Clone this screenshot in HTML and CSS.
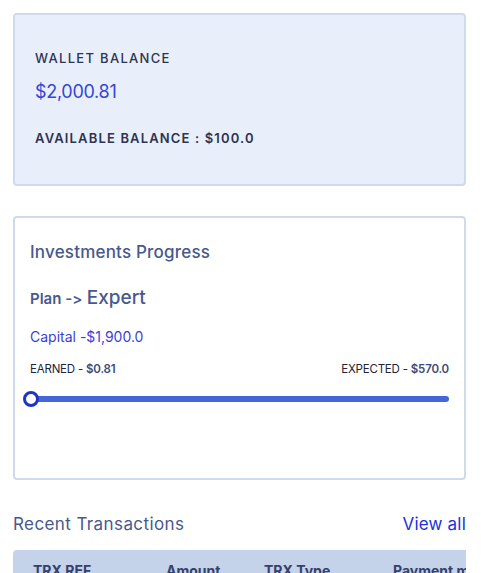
FILE: index.html
```html
<!DOCTYPE html>
<html>
<head>
<meta charset="utf-8">
<link rel="stylesheet" href="styles.css">
</head>
<body>
<div class="page">
  <section class="card wallet">
    <div class="label">WALLET BALANCE</div>
    <div class="amount">$2,000.81</div>
    <div class="avail">AVAILABLE BALANCE : $100.0</div>
  </section>

  <section class="card progress">
    <h2 class="title">Investments Progress</h2>
    <div class="plan"><span class="plan-k">Plan -&gt;</span> <span class="plan-v">Expert</span></div>
    <div class="capital">Capital -$1,900.0</div>
    <div class="range-labels">
      <span>EARNED - <b>$0.81</b></span>
      <span>EXPECTED - <b>$570.0</b></span>
    </div>
    <div class="slider">
      <div class="track"></div>
      <div class="thumb"></div>
    </div>
  </section>

  <div class="recent-head">
    <h3>Recent Transactions</h3>
    <a class="view-all">View all</a>
  </div>
  <div class="table-wrap">
    <div class="thead">
      <span class="col c1">TRX REF</span>
      <span class="col c2">Amount</span>
      <span class="col c3">TRX Type</span>
      <span class="col c4">Payment method</span>
    </div>
  </div>
</div>
</body>
</html>
```

FILE: styles.css
```css
* { box-sizing: border-box; }
html, body { margin: 0; padding: 0; background: #fff; }
body {
  font-family: "Inter", "Open Sans", sans-serif;
  color: #2e3450;
  overflow: hidden;
  font-variant-ligatures: none;
  font-feature-settings: "calt" 0, "liga" 0;
}
.page { width: 453px; margin: 13px 0 0 13px; }

.card {
  border: 2px solid #cfdaee;
  border-radius: 4px;
}
.wallet {
  height: 173px;
  background: #e9effa;
  padding: 34px 20px 0 20px;
}
.wallet .label {
  font-size: 13px;
  font-weight: 500;
  letter-spacing: 1.3px;
  color: #2d3350;
  line-height: 18px;
}
.wallet .amount {
  margin-top: 13px;
  font-size: 18px;
  color: #3346d6;
  letter-spacing: -0.3px;
  line-height: 24px;
}
.wallet .avail {
  margin-top: 25px;
  font-size: 13px;
  font-weight: 600;
  letter-spacing: 1.15px;
  color: #2d3350;
  line-height: 18px;
}

.progress {
  margin-top: 30px;
  height: 264px;
  background: #fff;
  padding: 22px 15px 0 15px;
}
.title {
  margin: 0;
  font-size: 17px;
  font-weight: 500;
  color: #47598e;
  line-height: 24px;
  letter-spacing: 0.2px;
}
.plan {
  margin-top: 21px;
  color: #47598e;
  line-height: 26px;
}
.plan-k { font-size: 15px; font-weight: 600; }
.plan-v { font-size: 19px; font-weight: 500; }
.capital {
  margin-top: 15px;
  font-size: 14px;
  color: #3a3fd6;
  line-height: 20px;
}
.range-labels {
  margin-top: 14px;
  display: flex;
  justify-content: space-between;
  font-size: 11.5px;
  color: #22253a;
  line-height: 16px;
  letter-spacing: -0.2px;
}
.range-labels b { font-weight: 600; color: #3c4a78; }
.slider {
  position: relative;
  margin-top: 14px;
  height: 16px;
}
.track {
  position: absolute;
  left: 1px; right: 0; top: 5px;
  height: 6px;
  background: #4566d9;
  border-radius: 3px;
}
.thumb {
  position: absolute;
  left: -7px; top: 0;
  width: 16px; height: 16px;
  border-radius: 50%;
  background: #fff;
  border: 3px solid #1f33c9;
}

.recent-head {
  margin-top: 32px;
  display: flex;
  justify-content: space-between;
  align-items: center;
  line-height: 24px;
}
.recent-head h3 {
  margin: 0;
  font-size: 17px;
  font-weight: 400;
  color: #47598e;
  letter-spacing: 0.4px;
}
.view-all {
  font-size: 17px;
  color: #2130e0;
  letter-spacing: 0.2px;
}
.table-wrap {
  margin-top: 14px;
  overflow: hidden;
}
.thead {
  display: flex;
  background: #c5d3ea;
  border-radius: 4px 0 0 0;
  height: 40px;
  padding: 12px 0 0 20px;
  white-space: nowrap;
  font-size: 14px;
  font-weight: 700;
  color: #34416c;
}
.col { flex-shrink: 0; }
.c1 { width: 133px; }
.c2 { width: 98px; }
.c3 { width: 129px; }
```
